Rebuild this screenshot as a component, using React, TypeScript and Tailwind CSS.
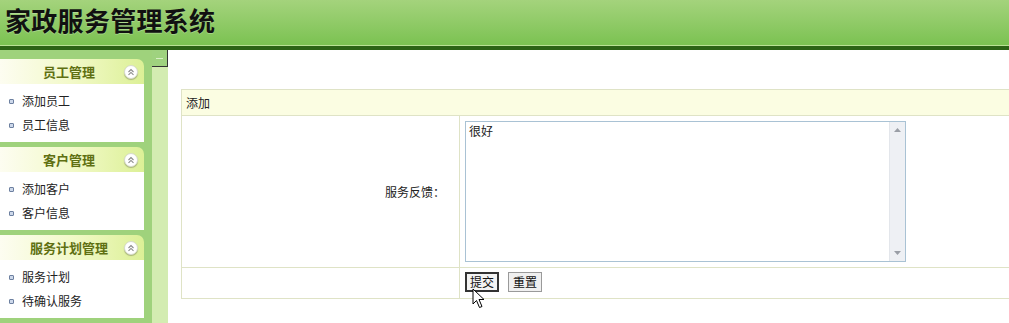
import React from "react"

const font = "font-['Noto_Sans_CJK_SC','Noto_Sans',sans-serif]"

const menus = [
    { title: "员工管理", items: ["添加员工", "员工信息"] },
    { title: "客户管理", items: ["添加客户", "客户信息"] },
    { title: "服务计划管理", items: ["服务计划", "待确认服务"] },
]

const Collapse = () => (
    <span className="w-[14px] h-[14px] rounded-full bg-white border border-[#d8dccb] shadow-[0_1px_1px_rgba(0,0,0,0.25)] flex items-center justify-center">
        <svg width="8" height="8" viewBox="0 0 8 8" fill="none" stroke="#8a8a8a" strokeWidth="1.1">
            <path d="M1.5 4 L4 1.6 L6.5 4" />
            <path d="M1.5 6.8 L4 4.4 L6.5 6.8" />
        </svg>
    </span>
)

const Panel = ({ title, items }: { title: string; items: string[] }) => (
    <div>
        <div className="h-[25px] rounded-tr-[7px] bg-gradient-to-r from-[#fdfdf1] via-[#f2f9c8] to-[#dcf096] flex items-center relative">
            <span className="flex-1 text-center text-[13px] font-bold text-[#5f7012] pl-[14px]">{title}</span>
            <span className="mr-[6px]">
                <Collapse />
            </span>
        </div>
        <div className="h-[58px] bg-white pt-[5px]">
            {items.map((it) => (
                <div key={it} className="h-[24px] flex items-center pl-[9px] text-[12px] text-[#222]">
                    <span className="w-[5px] h-[5px] rounded-[1px] border border-[#6d80a0] bg-[#cdd8ea] mr-[8px]" />
                    {it}
                </div>
            ))}
        </div>
    </div>
)

export default function App() {
    return (
        <div className={`w-[1009px] h-[323px] overflow-hidden bg-white ${font}`}>
            {/* header */}
            <header>
                <div className="h-[45px] bg-gradient-to-b from-[#a4d37c] to-[#7bc251] pl-[5px] pt-[6px]">
                    <h1 className="text-[26px] leading-[28px] font-semibold text-[#111] tracking-[0.3px] [text-shadow:0_1px_0_rgba(255,255,255,0.25)]">
                        家政服务管理系统
                    </h1>
                </div>
                <div className="h-px bg-[#b8e193]" />
                <div className="h-[4px] bg-[#2c6315]" />
            </header>

            <div className="flex h-[273px]">
                {/* sidebar */}
                <aside className="w-[152px] bg-[#9fd27c] pt-[9px] pr-[8px] flex flex-col gap-[5px]">
                    {menus.map((m) => (
                        <Panel key={m.title} title={m.title} items={m.items} />
                    ))}
                </aside>

                {/* splitter */}
                <div className="w-[16px] bg-[#d3ecb1]">
                    <div className="h-[17px] bg-[#9fd27f] border-r border-b border-[#333] flex items-center justify-center">
                        <span className="w-[7px] h-px bg-[#d9f0c6]" />
                    </div>
                </div>

                {/* content */}
                <main className="flex-1 pl-[13px] pt-[39px] overflow-hidden relative">
                    <div className="w-[900px] border border-[#dfe3c6] text-[12px] text-[#222]">
                        <div className="h-[26px] bg-[#fbfde2] flex items-center pl-[4px] border-b border-[#dfe3c6]">添加</div>
                        <div className="flex h-[152px] border-b border-[#dfe3c6]">
                            <div className="w-[278px] border-r border-[#dfe3c6] flex items-center justify-end pr-[14px]">
                                服务反馈：
                            </div>
                            <div className="pl-[5px] pt-[5px]">
                                <div className="w-[441px] h-[141px] border border-[#a9c2d4] flex">
                                    <div className="flex-1 pl-[3px] pt-[1px] leading-[16px]">很好</div>
                                    <div className="w-[16px] bg-[#eef0f4] border-l border-[#e3e6eb] flex flex-col justify-between items-center py-[6px]">
                                        <svg width="7" height="4" viewBox="0 0 7 4">
                                            <path d="M0 4 L3.5 0 L7 4 Z" fill="#9a9ea6" />
                                        </svg>
                                        <svg width="7" height="4" viewBox="0 0 7 4">
                                            <path d="M0 0 L3.5 4 L7 0 Z" fill="#9a9ea6" />
                                        </svg>
                                    </div>
                                </div>
                            </div>
                        </div>
                        <div className="flex h-[30px]">
                            <div className="w-[278px] border-r border-[#dfe3c6]" />
                            <div className="pl-[5px] pt-[4px] flex gap-[9px] items-start">
                                <button className="w-[34px] h-[20px] border-2 border-[#333] bg-[#f3f3f3] text-[12px] leading-[14px] text-[#111]">
                                    提交
                                </button>
                                <button className="w-[34px] h-[20px] border border-[#9a9a9a] bg-[#f0f0f0] text-[12px] leading-[14px] text-[#111]">
                                    重置
                                </button>
                            </div>
                        </div>
                    </div>

                    {/* mouse pointer */}
                    <svg className="absolute left-[304px] top-[238px]" width="14" height="21" viewBox="0 0 14 21">
                        <path d="M1 1 L1 16 L4.5 12.5 L7.5 19.5 L10 18.5 L7 11.5 L12 11.5 Z" fill="#fff" stroke="#000" strokeWidth="1" strokeLinejoin="round" />
                    </svg>
                </main>
            </div>
        </div>
    )
}
